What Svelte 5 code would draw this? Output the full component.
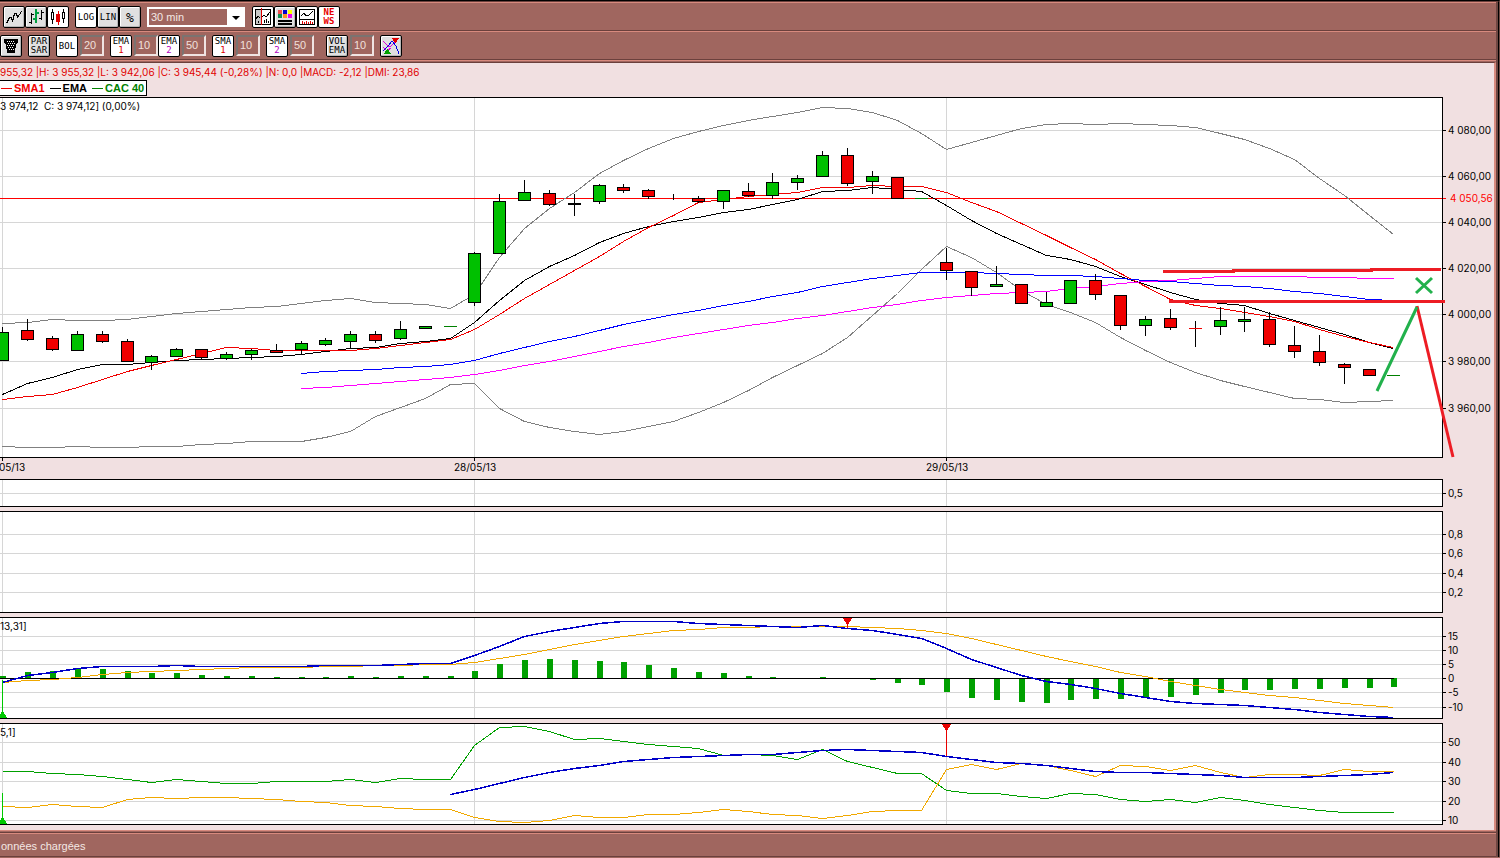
<script>
  const WIDTH = 1443;

  let period = '30 min';
  let scale = 'LOG';

  // one x per 30 minute bar
  const xs = [
    2, 27, 52, 77, 102, 127, 151, 176, 201, 226, 251, 276, 301, 325, 350, 375, 400, 425, 450,
    474, 499, 524, 549, 574, 599, 623, 648, 673, 698, 723, 748, 772, 797, 822, 847, 872, 897, 921,
    946, 971, 996, 1021, 1046, 1070, 1095, 1120, 1145, 1170, 1195, 1220, 1244, 1269, 1294, 1319, 1344, 1369, 1393
  ];

  const sessions = [
    { x: 2, labelX: 12, label: '05/13' },
    { x: 474, labelX: 475, label: '28/05/13' },
    { x: 946, labelX: 947, label: '29/05/13' }
  ];

  // bar index, body top, body bottom, high, low, direction
  const candles = [
    [0, 332, 360, 327, 360, 'up'], [1, 330, 339, 319, 341, 'down'], [2, 338, 349, 336, 351, 'down'],
    [3, 334, 350, 331, 350, 'up'], [4, 334, 341, 331, 343, 'down'], [5, 341, 361, 339, 361, 'down'],
    [6, 356, 362, 355, 370, 'up'], [7, 349, 356, 348, 356, 'up'], [8, 349, 357, 349, 359, 'down'],
    [9, 354, 358, 352, 360, 'up'], [10, 350, 354, 349, 360, 'up'], [11, 350, 352, 344, 352, 'down'],
    [12, 343, 349, 341, 355, 'up'], [13, 340, 344, 338, 346, 'up'], [14, 334, 341, 331, 349, 'up'],
    [15, 334, 340, 331, 343, 'down'], [16, 329, 338, 321, 340, 'up'], [17, 326, 328, 326, 328, 'up'],
    [19, 253, 302, 252, 306, 'up'], [20, 201, 253, 194, 253, 'up'], [21, 192, 200, 180, 200, 'up'],
    [22, 193, 204, 190, 206, 'down'], [23, 203, 204, 194, 216, 'flat'], [24, 185, 201, 184, 204, 'up'],
    [25, 187, 190, 184, 193, 'down'], [26, 190, 196, 189, 199, 'down'], [28, 198, 201, 196, 203, 'down'],
    [29, 190, 201, 190, 209, 'up'], [30, 191, 195, 183, 197, 'down'], [31, 182, 195, 173, 199, 'up'],
    [32, 178, 182, 175, 190, 'up'], [33, 155, 176, 151, 176, 'up'], [34, 155, 183, 148, 186, 'down'],
    [35, 176, 181, 171, 194, 'up'], [36, 177, 198, 177, 198, 'down'], [38, 262, 270, 248, 280, 'down'],
    [39, 271, 287, 271, 296, 'down'], [40, 284, 286, 266, 286, 'up'], [41, 284, 303, 284, 303, 'down'],
    [42, 302, 306, 292, 306, 'up'], [43, 280, 303, 280, 303, 'up'], [44, 280, 294, 274, 300, 'down'],
    [45, 295, 325, 295, 330, 'down'], [46, 319, 325, 316, 336, 'up'], [47, 318, 327, 309, 330, 'down'],
    [49, 320, 326, 307, 335, 'up'], [50, 319, 321, 307, 332, 'up'], [51, 319, 344, 312, 347, 'down'],
    [52, 345, 351, 326, 358, 'down'], [53, 351, 362, 335, 366, 'down'], [54, 364, 367, 363, 384, 'down'],
    [55, 369, 375, 369, 375, 'down']
  ];

  // bars whose open equals their close
  const dashes = [[18, 326, 'up'], [37, 198, 'up'], [48, 328, 'down'], [56, 375, 'up']];

  const priceLines = [
    { name: 'band', from: 0, ys: [323, 322, 319, 320, 320, 319, 316, 313, 311, 309, 307, 306, 303, 300, 298, 302, 303, 304, 308, 294, 257, 228, 208, 192, 173, 160, 148, 138, 131, 125, 120, 116, 112, 107, 108, 112, 120, 133, 149, 142, 135, 128, 124, 123, 124, 123, 124, 125, 127, 133, 139, 148, 159, 178, 195, 215, 234] },
    { name: 'band', from: 0, ys: [446, 447, 447, 446, 447, 447, 446, 446, 444, 443, 441, 441, 441, 437, 431, 416, 407, 398, 384, 383, 408, 421, 427, 431, 434, 431, 426, 421, 412, 402, 390, 377, 365, 353, 337, 315, 293, 269, 246, 257, 272, 290, 304, 312, 322, 337, 350, 362, 372, 380, 386, 392, 398, 399, 402, 401, 400] },
    { name: 'ema', from: 0, ys: [394, 383, 377, 369, 364, 364, 362, 360, 359, 358, 357, 356, 354, 351, 348, 347, 343, 341, 338, 322, 300, 280, 266, 255, 242, 233, 226, 221, 217, 212, 209, 204, 199, 191, 190, 187, 189, 191, 205, 220, 233, 244, 255, 259, 266, 276, 284, 292, 299, 303, 305, 313, 320, 327, 334, 342, 348] },
    { name: 'sma', from: 0, ys: [399, 396, 394, 387, 379, 371, 365, 359, 353, 347, 348, 350, 350, 350, 350, 348, 345, 342, 339, 329, 314, 298, 284, 270, 256, 241, 227, 215, 202, 199, 196, 194, 192, 187, 187, 185, 186, 186, 192, 202, 211, 223, 235, 247, 259, 273, 286, 299, 305, 308, 312, 316, 321, 329, 336, 342, 347] },
    { name: 'slow-ema', from: 12, ys: [373, 371, 370, 369, 367, 366, 364, 360, 353, 347, 341, 336, 330, 324, 319, 314, 310, 305, 301, 296, 292, 286, 282, 278, 275, 272, 272, 272, 273, 274, 275, 275, 276, 278, 280, 281, 283, 285, 286, 288, 291, 293, 296, 299, 300] },
    { name: 'slow-sma', from: 12, ys: [388, 387, 385, 383, 381, 379, 377, 374, 370, 365, 361, 356, 351, 346, 342, 337, 333, 329, 325, 322, 318, 315, 311, 307, 304, 300, 297, 295, 293, 292, 291, 288, 286, 283, 281, 280, 278, 276, 276, 276, 276, 277, 277, 278, 278] }
  ];

  const priceTicks = [[130, '4 080,00'], [176, '4 060,00'], [222, '4 040,00'], [268, '4 020,00'], [314, '4 000,00'], [361, '3 980,00'], [408, '3 960,00']];

  // value end of each bar; the base is the zero line
  const MACD_ZERO = 678;
  const histogram = [676, 672, 671, 669, 669, 671, 673, 673, 675, 676, 676, 677, 677, 677, 676, 677, 676, 676, 676, 671, 664, 660, 659, 660, 661, 662, 665, 668, 672, 673, 676, 677, 678, 677, 678, 680, 683, 685, 692, 698, 700, 702, 703, 700, 699, 699, 697, 697, 695, 693, 690, 690, 689, 689, 688, 688, 687];

  const panels = [
    { top: 479, height: 28, label: '', ticks: [[493, '0,5']], lines: [], markers: [] },
    { top: 511, height: 102, label: '', ticks: [[534, '0,8'], [553, '0,6'], [573, '0,4'], [592, '0,2']], lines: [], markers: [] },
    {
      top: 617,
      height: 102,
      label: '13,31]',
      macd: true,
      ticks: [[636, '15'], [650, '10'], [664, '5'], [678, '0'], [692, '-5'], [707, '-10']],
      lines: [
        { name: 'signal', from: 0, ys: [682, 680, 679, 677, 674, 672, 671, 670, 669, 668, 667, 667, 667, 666, 666, 665, 665, 664, 664, 662, 658, 654, 649, 644, 640, 636, 633, 630, 629, 627, 627, 626, 626, 626, 626, 627, 628, 630, 633, 638, 644, 650, 656, 661, 666, 672, 676, 681, 685, 689, 692, 695, 697, 700, 703, 705, 707] },
        { name: 'main', from: 0, ys: [682, 675, 672, 668, 666, 666, 666, 665, 666, 666, 666, 666, 666, 665, 665, 665, 664, 663, 663, 655, 646, 636, 631, 627, 623, 621, 621, 621, 623, 624, 625, 626, 627, 625, 628, 630, 634, 638, 648, 659, 667, 675, 681, 684, 688, 693, 697, 701, 703, 704, 705, 707, 709, 712, 714, 716, 717] }
      ],
      markers: [{ x: 2, from: 680, to: 717, up: true }, { x: 847, from: 618, to: 628 }]
    },
    {
      top: 723,
      height: 102,
      label: '5,1]',
      ticks: [[742, '50'], [762, '40'], [781, '30'], [801, '20'], [820, '10']],
      lines: [
        { name: 'plus', from: 0, ys: [771, 771, 773, 774, 776, 779, 782, 779, 781, 783, 783, 781, 781, 781, 779, 782, 778, 779, 779, 745, 727, 726, 731, 739, 738, 741, 744, 746, 748, 755, 754, 755, 759, 749, 761, 767, 773, 773, 790, 793, 793, 796, 798, 793, 794, 799, 801, 799, 802, 797, 800, 804, 807, 810, 812, 812, 812] },
        { name: 'signal', from: 0, ys: [806, 807, 804, 806, 807, 799, 797, 798, 797, 797, 798, 799, 801, 802, 805, 806, 808, 809, 809, 817, 821, 822, 820, 815, 817, 817, 814, 814, 812, 809, 811, 814, 815, 818, 815, 811, 810, 810, 769, 764, 769, 763, 765, 770, 776, 765, 766, 770, 765, 772, 777, 774, 774, 775, 769, 771, 771] },
        { name: 'main', from: 18, ys: [794, 789, 783, 777, 772, 768, 765, 761, 759, 757, 756, 755, 754, 754, 752, 750, 749, 750, 751, 752, 756, 759, 762, 763, 765, 768, 771, 772, 772, 773, 774, 775, 777, 777, 777, 776, 775, 774, 772] }
      ],
      markers: [{ x: 2, from: 793, to: 823, up: true }, { x: 946, from: 724, to: 756 }]
    }
  ];

  const indicatorGroups = [
    [{ name: 'BOL', value: 20, on: true }],
    [{ name: 'EMA', num: '1', value: 10, on: true }, { name: 'EMA', num: '2', value: 50, on: true }],
    [{ name: 'SMA', num: '1', value: 10, on: true }],
    [{ name: 'SMA', num: '2', value: 50, on: true }],
    [{ name: 'VOL', second: 'EMA', value: 10, on: false }]
  ];

  const points = (line) => line.ys.map((y, i) => `${xs[line.from + i] + 0.5},${y + 0.5}`).join(' ');
  const border = (top, height) => `M0 ${top + 0.5}H${WIDTH - 0.5}V${top + height - 0.5}H0`;
  const triangle = (m) =>
    m.up
      ? `M${m.x - 4} ${m.to + 1}h9l-4.5-8z`
      : `M${m.x - 4} ${m.from}h9l-4.5 8z`;
</script>

<div class="window">
  <div class="frame">
    <div class="bar">
      <div class="group">
        <button class="tool" aria-label="Ligne"><svg viewBox="0 0 18 18"><path d="M1.500 15.500l3-6h2l1 4 2-8h2l1 4 4-6" /></svg></button>
        <button class="tool" aria-label="Barres">
          <svg viewBox="0 0 18 18"><path d="M4.500 5v11M2 14.500h2M5 6.500h2M14.500 2v10M12 10.500h2M15 4.500h2" /><path class="green" d="M9 1v14M6 11h3M10 5h2" /></svg>
        </button>
        <button class="tool on" aria-label="Chandeliers">
          <svg viewBox="0 0 18 18"><path d="M3.500 1v3M3.500 12v4M2.500 4.500h2v7h-2zM14.500 1v3M14.500 11v4M13.500 4.500h2v6h-2z" /><path class="red" d="M9.500 3v14" /><path class="red red-fill" d="M7.500 6.500h3v7h-3z" /></svg>
        </button>
      </div>
      <div class="group">
        {#each ['LOG', 'LIN', '%'] as s}
          <button class="tool" class:on={scale === s} class:big={s === '%'} on:click={() => (scale = s)}>{s}</button>
        {/each}
      </div>
      <div class="period">
        <select aria-label="Période" bind:value={period}>
          <option>30 min</option>
          <option>60 min</option>
        </select>
        <svg class="arrow" viewBox="0 0 8 4"><path d="M0 0h8l-4 4z" /></svg>
      </div>
      <div class="group">
        <button class="tool on" aria-label="Curseur">
          <svg viewBox="0 0 18 18"><path class="shade" d="M1 1h7v16h-7z" /><path d="M1.500 1.500h15v15h-15zM2 11l2-3 2 2M8 9l2-2 2 2 4-5M10.500 15v-3M12.500 15v-4M14.500 15v-2M4.500 15v-2" /><path class="red" d="M7.500 0v17" /></svg>
        </button>
        <button class="tool" aria-label="Couleurs">
          <svg viewBox="0 0 18 18">
            <path fill="#f05050" stroke="none" d="M2 2h4v4h-4z" /><path fill="#0000d0" stroke="none" d="M7 2h4v4h-4z" /><path fill="#ffff00" stroke="none" d="M12 2h4v4h-4z" />
            <path fill="#109050" stroke="none" d="M2 6h4v4h-4z" /><path fill="#ff9020" stroke="none" d="M7 6h4v4h-4z" /><path fill="#f000f0" stroke="none" d="M12 6h4v4h-4z" />
            <path stroke-width="2" d="M2 13h14M2 16h14" />
          </svg>
        </button>
        <button class="tool on" aria-label="Volume">
          <svg viewBox="0 0 18 18"><path d="M1.500 1.500h15v15h-15zM1.500 11.500h15M3 8l3-3 2 3 3-1 4-4" /><path class="red" d="M4.500 16v-3M6.500 16v-2M8.500 16v-3M10.500 16v-2M12.500 16v-3M14.500 16v-2" /></svg>
        </button>
        <button class="tool on news"><span>NE</span><span>WS</span></button>
      </div>
    </div>

    <div class="bar second">
      <button class="tool" aria-label="Filtre">
        <svg viewBox="0 0 18 18"><path fill="#000" d="M2.500 2.500h13v3l-2 2-1 8h-7l-1-8-2-2z" /><path class="dots" stroke-dasharray="1 1" d="M5 4.500h8M6 6.500h7M5 8.500h7M6 10.500h6M7 12.500h5" /></svg>
      </button>
      <button class="tool"><span>PAR</span><span>SAR</span></button>
      {#each indicatorGroups as group, g}
        <div class="group" class:wide={g === indicatorGroups.length - 1}>
          {#each group as item}
            <button class="tool" class:on={item.on}>
              <span>{item.name}</span>
              {#if item.num}<span class="num{item.num}">{item.num}</span>{/if}
              {#if item.second}<span>{item.second}</span>{/if}
            </button>
            <input type="text" aria-label="{item.name} {item.num || ''}" value={item.value} />
          {/each}
        </div>
      {/each}
      <button class="tool" aria-label="Signaux">
        <svg viewBox="0 0 18 18"><path stroke="#e000e0" d="M1 4l4 4 3 2 4-4 4-4M1 10l4 4 4-3" /><path stroke="#0000e0" d="M1 14l5-5 4-5 4 5 3 8" /><path fill="#e00000" stroke="none" d="M10 1h7l-3 5h-1z" /><path fill="#00a000" stroke="none" d="M2 17h7l-3-5h-1z" /></svg>
      </button>
    </div>

    <main class="charts">
      <div class="quote">955,32 |H: 3 955,32 |L: 3 942,06 |C: 3 945,44 (-0,28%) |N: 0,0 |MACD: -2,12 |DMI: 23,86</div>
      <div class="legend">
        <span class="sma-key">SMA1</span>
        <span class="ema-key">EMA</span>
        <span class="cac-key">CAC 40</span>
      </div>

      <div class="panel price">
        <svg class="plot" height="361" viewBox="0 97 {WIDTH} 361" preserveAspectRatio="none">
          <rect class="paper" y="97" width={WIDTH} height="361" />
          {#each priceTicks as [y]}
            <path class="grid" d="M0 {y + 0.5}H{WIDTH}" />
          {/each}
          {#each sessions as s}
            <path class="grid" d="M{s.x + 0.5} 97V458" />
          {/each}
          <path class="last" d="M0 198.500H{WIDTH}" />
          {#each priceLines as line}
            <polyline class="line {line.name}" points={points(line)} />
          {/each}
          <path class="wick" d="M{xs[27] + 0.5} 194V200M{xs[48] + 0.5} 321V347" />
          {#each candles as [i, top, bottom, high, low, dir]}
            <path class="wick" d="M{xs[i] + 0.5} {high}V{low}" />
            <rect class="body {dir}" x={xs[i] - 5.5} y={top + 0.5} width="12" height={bottom - top} />
          {/each}
          {#each dashes as [i, y, dir]}
            <path class="dash {dir}" d="M{xs[i] - 6} {y + 0.5}h13" />
          {/each}
          <path class="border" d={border(97, 361)} />
          <path class="note red-note" d="M1163 271.500H1233V270.500H1371V269.500H1441M1169 301.500H1445" />
          <path class="note red-note slant" d="M1417 306L1453 457" />
          <path class="note green-note slant" d="M1377 391L1417 307M1416 278L1432 293M1432 278L1416 293" />
        </svg>
        <svg class="axis" height="361" viewBox="0 97 51 361">
          {#each priceTicks as [y, label]}
            <path class="tick" d="M0 {y + 0.5}h3" />
            <text x="5" y={y + 4}>{label}</text>
          {/each}
          <path class="last" d="M0 198.500h3" />
          <text class="last-label" x="7" y="202">4 050,56</text>
        </svg>
        <span class="caption">3 974,12&nbsp; C: 3 974,12] (0,00%)</span>
      </div>

      <div class="panel">
        <svg class="dates" height="21">
          {#each sessions as s}
            <line class="tick" x1="{((s.x + 0.5) / WIDTH) * 100}%" x2="{((s.x + 0.5) / WIDTH) * 100}%" y2="3" />
            <text x="{(s.labelX / WIDTH) * 100}%" y="13">{s.label}</text>
          {/each}
        </svg>
      </div>

      <div class="studies">
        {#each panels as p}
          <div class="panel">
            <svg class="plot" height={p.height} viewBox="0 {p.top} {WIDTH} {p.height}" preserveAspectRatio="none">
              <rect class="paper" y={p.top} width={WIDTH} height={p.height} />
              {#each p.ticks as [y]}
                <path class="grid" d="M0 {y + 0.5}H{WIDTH}" />
              {/each}
              {#each sessions as s}
                <path class="grid" d="M{s.x + 0.5} {p.top}v{p.height}" />
              {/each}
              {#if p.macd}
                {#each histogram as end, i}
                  <rect class="hist" x={xs[i] - 2} y={Math.min(end, MACD_ZERO)} width="6" height={Math.abs(end - MACD_ZERO)} />
                {/each}
                <path class="tick" d="M0 {MACD_ZERO + 0.5}H1394" />
              {/if}
              {#each p.lines as line}
                <polyline class="line {line.name}" points={points(line)} />
              {/each}
              <path class="border" d={border(p.top, p.height)} />
              {#each p.markers as m}
                <path class="marker" class:buy={m.up} d="M{m.x} {m.from}h1V{m.to}h-1z" />
                <path class="marker" class:buy={m.up} d={triangle(m)} />
              {/each}
            </svg>
            <svg class="axis" height={p.height} viewBox="0 {p.top} 51 {p.height}">
              {#each p.ticks as [y, label]}
                <path class="tick" d="M0 {y + 0.5}h3" />
                <text x="5" y={y + 4}>{label}</text>
              {/each}
            </svg>
            {#if p.label}<span class="caption">{p.label}</span>{/if}
          </div>
        {/each}
      </div>
    </main>

    <footer class="status">onnées chargées</footer>
  </div>
</div>

<style>
  :global(body) { margin: 0; background: #a0665f; }

  .window {
    border-top: 1px solid #000;
    border-right: 1px solid #6b4842;
    font-family: "Liberation Sans", Arial, sans-serif;
    font-size: 11px;
    color: #000;
    overflow: hidden;
  }
  .frame {
    border-top: 1px solid #6b403c;
    border-right: 1px solid #000;
    box-shadow: inset -2px 0 #6f4742;
    padding-right: 2px;
    background: #a0665f;
  }

  .bar {
    display: flex;
    gap: 6px;
    height: 24px;
    padding: 3px 3px 0;
    border-top: 1px solid #d88a7e;
    border-bottom: 1px solid #6b403c;
  }
  .bar.second { padding-left: 0; }
  .group { display: flex; }
  .bar.second .group.wide { margin-left: 6px; }

  .tool {
    width: 22px;
    height: 22px;
    padding: 0;
    border: 1px solid #000;
    border-radius: 2px;
    background: #e0e0e0;
    box-shadow: inset 1px 1px #fff, inset -1px -1px #b8b8b8;
    font-family: "DejaVu Sans Mono", monospace;
    font-size: 9px;
    line-height: 9px;
    color: #000;
  }
  .tool.on { background: #fff; box-shadow: none; }
  .tool.big { font-size: 13px; }
  .tool span { display: block; }
  .tool svg { display: block; width: 18px; height: 18px; margin: 1px; fill: none; stroke: #000; shape-rendering: crispEdges; }
  .tool .green { stroke: #00a040; stroke-width: 2; }
  .tool .red { stroke: #e00000; }
  .tool .red-fill { fill: #e00000; }
  .tool .shade { stroke: none; fill: #c8c8c8; }
  .tool .dots { stroke: #fff; }
  .tool.news { color: #e80000; font-weight: bold; }
  .tool .num1 { color: #e00000; }
  .tool .num2 { color: #b000c0; }

  .tool + input { margin-left: 2px; }
  input {
    box-sizing: border-box;
    width: 24px;
    height: 21px;
    padding: 0 0 2px 2px;
    border: 2px solid;
    border-color: #7b7370 #f0e4e2 #f0e4e2 #7b7370;
    background: #a0665f;
    color: #f0e0dc;
    font: inherit;
  }

  .period { position: relative; width: 98px; height: 20px; margin-top: 1px; margin-right: 1px; }
  select {
    appearance: none;
    box-sizing: border-box;
    width: 100%;
    height: 20px;
    padding: 0 18px 0 2px;
    border: 2px solid #fff;
    border-right-width: 18px;
    border-radius: 0;
    background: #a0665f;
    color: #f4e8e4;
    font: inherit;
  }
  .arrow { position: absolute; right: 5px; top: 9px; width: 8px; height: 4px; pointer-events: none; }

  .charts {
    margin-top: 2px;
    padding-bottom: 5px;
    border-top: 1px solid #6b403c;
    border-right: 2px solid #d88a7e;
    border-bottom: 1px solid #d88a7e;
    background: #f1e0e1;
    box-shadow: 0 -1px #a0665f, 0 -2px #d88a7e;
    font-family: Inter, Verdana, sans-serif;
    font-size: 10px;
  }
  .quote { height: 17px; line-height: 19px; color: #e00000; white-space: nowrap; }

  .legend {
    display: flex;
    gap: 5px;
    box-sizing: border-box;
    width: 147px;
    height: 16px;
    margin-bottom: 1px;
    padding-left: 1px;
    border: 1px solid #000;
    border-left: 0;
    background: #fff;
    font-family: "Liberation Sans", Arial, sans-serif;
    font-size: 11px;
    font-weight: bold;
    line-height: 15px;
    white-space: nowrap;
  }
  .legend span { display: flex; align-items: center; gap: 2px; }
  .legend span::before { content: ''; width: 11px; height: 1px; background: currentColor; }
  .sma-key { color: #f00000; }
  .cac-key { color: #008000; }

  .panel { position: relative; display: flex; }
  .panel svg { display: block; }
  .plot { flex: 1; min-width: 0; shape-rendering: crispEdges; }
  .price .plot { overflow: visible; }
  .axis { flex: none; width: 51px; overflow: visible; }
  .dates { flex: 1; margin-right: 51px; }
  .dates text { text-anchor: middle; }
  .studies { display: grid; gap: 4px; }
  .caption { position: absolute; left: 0; top: 2px; line-height: 14px; }

  .paper { fill: #fff; }
  .grid { stroke: #d6d6d6; }
  .border { fill: none; stroke: #000; }
  .tick { stroke: #000; }
  .last { stroke: #f00; }
  .last-label { fill: #f00; }

  .line { fill: none; stroke: #000; }
  .band { stroke: #808080; }
  .sma { stroke: #f00000; }
  .slow-ema { stroke: #0000ff; }
  .slow-sma { stroke: #ff00ff; }
  .main { stroke: #0000c8; stroke-width: 1.5; }
  .signal { stroke: #f0a800; }
  .plus { stroke: #00a000; }

  .wick { stroke: #000; }
  .body { stroke: #000; }
  .body.up { fill: #00c000; }
  .body.down { fill: #f00000; }
  .dash.up { stroke: #008000; }
  .dash.down { stroke: #f00000; }
  .hist { fill: #00a000; }
  .marker { fill: #e80000; }
  .marker.buy { fill: #00c800; }

  .note { fill: none; stroke-width: 3; }
  .red-note { stroke: #ed1c24; }
  .green-note { stroke: #22b14c; }
  .slant { shape-rendering: auto; }

  .status {
    margin-top: 1px;
    padding: 6px 0 2px 1px;
    border-top: 1px solid #6b403c;
    border-bottom: 1px solid #6b403c;
    box-shadow: inset 0 1px #d88a7e;
    color: #f4e8e4;
    line-height: 15px;
  }
</style>
